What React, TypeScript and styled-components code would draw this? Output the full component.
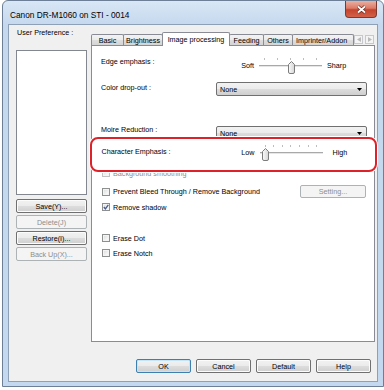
import styled, { createGlobalStyle } from "styled-components";

const GlobalStyle = createGlobalStyle`
  html, body {
    margin: 0;
    padding: 0;
    background: #ffffff;
  }
  body {
    font-family: "Liberation Sans", Arial, sans-serif;
    font-size: 7.2px;
    color: #000;
  }
  * {
    box-sizing: border-box;
  }
`;

const Window = styled.div`
  width: 382px;
  height: 387px;
  margin-left: 2px;
  display: flex;
  flex-direction: column;
  padding: 0 5px 4px 5px;
  border: 1px solid #6d7f96;
  border-radius: 6px 6px 0 0;
  background: linear-gradient(#d9e7f6 0px, #c5d8ee 24px, #c4d8ef 100%);
`;

const TitleBar = styled.div`
  height: 23px;
  display: flex;
  align-items: flex-start;
  flex: none;
`;

const Title = styled.div`
  margin-top: 9px;
  margin-left: 2px;
  font-size: 8.3px;
  line-height: 10px;
  white-space: nowrap;
`;

const CloseButton = styled.div`
  margin-left: auto;
  margin-right: 1px;
  width: 32px;
  height: 17px;
  border: 1px solid #7b3a30;
  border-top: none;
  border-radius: 0 0 4px 4px;
  background: linear-gradient(#eab0a2 0%, #dc7b66 45%, #c6442c 55%, #d2614a 100%);
  display: flex;
  align-items: center;
  justify-content: center;
`;

const Client = styled.div`
  flex: 1;
  display: flex;
  flex-direction: column;
  background: #f0f0f0;
  border: 1px solid #8ea0b6;
`;

const Body = styled.div`
  display: flex;
  flex: none;
`;

const LeftColumn = styled.div`
  width: 80px;
  margin-left: 7px;
  padding-top: 3px;
  display: flex;
  flex-direction: column;
`;

const SideLabel = styled.div`
  line-height: 10px;
  margin-left: 1px;
  white-space: nowrap;
`;

const ListBox = styled.div`
  margin-top: 12px;
  height: 145px;
  background: #fff;
  border: 1px solid #828790;
`;

const Button = styled.div<{ $disabled?: boolean; $primary?: boolean; $w?: number }>`
  height: 14px;
  width: ${(p) => (p.$w ? `${p.$w}px` : "100%")};
  flex: none;
  display: flex;
  align-items: center;
  justify-content: center;
  border-radius: 2px;
  white-space: nowrap;
  border: 1px solid ${(p) => (p.$disabled ? "#adb2b5" : p.$primary ? "#3c7fb1" : "#707070")};
  color: ${(p) => (p.$disabled ? "#8d8d8d" : "#000")};
  background: ${(p) =>
    p.$disabled
      ? "#f4f4f4"
      : "linear-gradient(#f2f2f2 0%, #ebebeb 49%, #dddddd 51%, #cfcfcf 100%)"};
  box-shadow: ${(p) =>
    p.$primary ? "inset 0 0 0 1px #c5e6f8" : p.$disabled ? "none" : "inset 0 0 0 1px #fcfcfc"};
`;

const SettingButton = styled(Button)`
  margin-left: auto;
  margin-right: 1px;
  height: 13px;
`;

const SideButtons = styled.div`
  margin-top: 4px;
  display: flex;
  flex-direction: column;
  gap: 2px;
`;

const RightColumn = styled.div`
  flex: 1;
  margin-left: 4px;
  margin-right: 2px;
  padding-top: 7px;
  display: flex;
  flex-direction: column;
`;

const TabStrip = styled.div`
  height: 14px;
  margin-bottom: -1px;
  display: flex;
  position: relative;
  z-index: 2;
`;

const TabScroller = styled.div`
  flex: 1;
  display: flex;
  overflow: hidden;
`;

const Tab = styled.div<{ $active?: boolean; $w: number; $clip?: boolean }>`
  flex: none;
  width: ${(p) => p.$w}px;
  height: ${(p) => (p.$active ? 14 : 11)}px;
  margin-top: ${(p) => (p.$active ? 0 : 2)}px;
  margin-left: -1px;
  position: relative;
  z-index: ${(p) => (p.$active ? 2 : 1)};
  border: 1px solid #898c95;
  border-bottom: none;
  border-radius: 2px 2px 0 0;
  background: ${(p) =>
    p.$active ? "#ffffff" : "linear-gradient(#f3f3f3 0%, #ebebeb 50%, #dedede 51%, #d4d4d4 100%)"};
  display: flex;
  align-items: ${(p) => (p.$active ? "flex-start" : "center")};
  justify-content: ${(p) => (p.$clip ? "flex-start" : "center")};
  padding-top: ${(p) => (p.$active ? 2 : 0)}px;
  padding-left: ${(p) => (p.$clip ? 3 : 0)}px;
  white-space: nowrap;
  overflow: hidden;
  &:first-child {
    margin-left: 0;
  }
`;

const TabArrows = styled.div`
  flex: none;
  display: flex;
  gap: 2px;
  margin-top: 3px;
  margin-right: 1px;
  height: 9px;
`;

const TabArrow = styled.div`
  width: 9px;
  height: 9px;
  border: 1px solid #c5c8cc;
  background: #f4f4f4;
  display: flex;
  align-items: center;
  justify-content: center;
`;

const Panel = styled.div`
  height: 297px;
  background: #fff;
  border: 1px solid #898c95;
  padding: 11px 7px 0 9px;
  display: flex;
  flex-direction: column;
`;

const FieldRow = styled.div<{ $mt: number }>`
  margin-top: ${(p) => p.$mt}px;
  height: 14px;
  display: flex;
  align-items: flex-start;
  flex: none;
`;

const Label = styled.div<{ $lt?: number }>`
  line-height: 10px;
  margin-top: ${(p) => p.$lt ?? 0}px;
  white-space: nowrap;
`;

const Dropdown = styled.div`
  margin-left: auto;
  width: 151px;
  height: 14px;
  border: 1px solid #707070;
  border-radius: 2px;
  background: linear-gradient(#f2f2f2 0%, #ebebeb 49%, #dddddd 51%, #cfcfcf 100%);
  display: flex;
  align-items: center;
  justify-content: space-between;
  padding: 0 4px 0 3px;
`;

const SliderRow = styled.div<{ $align: string; $mt?: number }>`
  margin-top: ${(p) => p.$mt ?? 0}px;
  height: 17px;
  display: grid;
  grid-template-columns: 1fr 30px 63px 40px;
  column-gap: 5px;
  align-items: ${(p) => p.$align};
  flex: none;
`;

const SideText = styled.div<{ $right?: boolean; $indent?: number }>`
  align-self: start;
  margin-top: 4px;
  line-height: 10px;
  text-align: ${(p) => (p.$right ? "right" : "left")};
  padding-left: ${(p) => p.$indent ?? 0}px;
  white-space: nowrap;
`;

const SliderBox = styled.div`
  position: relative;
  width: 63px;
  height: 17px;
`;

const Ticks = styled.div`
  height: 3px;
  padding: 0 5px;
  display: flex;
  justify-content: space-between;
`;

const Tick = styled.span`
  width: 1px;
  height: 2px;
  margin-top: 1px;
  background: #bdbdbd;
`;

const Track = styled.div`
  margin-top: 5px;
  height: 2px;
  border-top: 1px solid #a9a9a9;
  border-bottom: 1px solid #e6e6e6;
`;

const Thumb = styled.div`
  position: absolute;
  top: 4px;
  width: 7px;
  height: 13px;
`;

const Highlight = styled.div`
  margin: -3px -10px 0 -11px;
  height: 35px;
  border: 2.5px solid #dd2229;
  border-radius: 8px;
  background: #fff;
  box-shadow: 0 0 0 1px #fff;
  padding: 4.5px 7.5px 0 9.5px;
  position: relative;
  z-index: 1;
  flex: none;
`;

const CheckRow = styled.div<{ $mt: number; $h?: number; $disabled?: boolean }>`
  margin-top: ${(p) => p.$mt}px;
  height: ${(p) => p.$h ?? 12}px;
  display: flex;
  align-items: center;
  gap: 3px;
  padding-left: 1px;
  color: ${(p) => (p.$disabled ? "#8d8d8d" : "#000")};
  white-space: nowrap;
  flex: none;
`;

const Box = styled.span<{ $disabled?: boolean }>`
  width: 8px;
  height: 8px;
  flex: none;
  border: 1px solid ${(p) => (p.$disabled ? "#c2c2c2" : "#8e8f8f")};
  background: linear-gradient(135deg, #d9d9d9 0%, #f2f2f2 60%, #ffffff 100%);
  box-shadow: inset 0 0 0 1px #f4f4f4;
  display: flex;
  align-items: center;
  justify-content: center;
`;

const ButtonRow = styled.div`
  margin-top: 17px;
  padding-right: 6px;
  display: flex;
  justify-content: flex-end;
  gap: 5px;
  flex: none;
`;

const Slider = ({ value, ticks }: { value: number; ticks: number }) => (
  <SliderBox>
    <Ticks>
      {Array.from({ length: ticks }).map((_, i) => (
        <Tick key={i} />
      ))}
    </Ticks>
    <Track />
    <Thumb style={{ left: `${2 + (value * 54) / 100}px` }}>
      <svg width="7" height="13" viewBox="0 0 7 13">
        <defs>
          <linearGradient id={`th${value}`} x1="0" y1="0" x2="1" y2="0">
            <stop offset="0" stopColor="#fbfbfb" />
            <stop offset="1" stopColor="#d6d6d6" />
          </linearGradient>
        </defs>
        <path
          d="M0.5 3.5 L3.5 0.5 L6.5 3.5 L6.5 11 Q6.5 12.5 5 12.5 L2 12.5 Q0.5 12.5 0.5 11 Z"
          fill={`url(#th${value})`}
          stroke="#7c7c7c"
        />
      </svg>
    </Thumb>
  </SliderBox>
);

const Check = ({ checked, disabled }: { checked?: boolean; disabled?: boolean }) => (
  <Box $disabled={disabled}>
    {checked && (
      <svg width="6" height="6" viewBox="0 0 6 6">
        <path d="M0.8 3 L2.4 4.9 L5.3 0.8" fill="none" stroke="#4a5d8e" strokeWidth="1.3" />
      </svg>
    )}
  </Box>
);

const DropArrow = () => (
  <svg width="5" height="3" viewBox="0 0 5 3">
    <path d="M0 0 L5 0 L2.5 3 Z" fill="#000" />
  </svg>
);

const tabs = [
  { name: "Basic", w: 33 },
  { name: "Brightness", w: 40 },
  { name: "Image processing", w: 68, active: true },
  { name: "Feeding", w: 35 },
  { name: "Others", w: 30 },
  { name: "Imprinter/Addon", w: 62, clip: true },
];

export default function App() {
  return (
    <>
      <GlobalStyle />
      <Window>
        <TitleBar>
          <Title>Canon DR-M1060 on STI - 0014</Title>
          <CloseButton>
            <svg width="11" height="9" viewBox="0 0 11 9">
              <path d="M2 1.5 L9 7.5 M9 1.5 L2 7.5" stroke="#6a2418" strokeWidth="3.2" />
              <path d="M2 1.5 L9 7.5 M9 1.5 L2 7.5" stroke="#ffffff" strokeWidth="1.8" />
            </svg>
          </CloseButton>
        </TitleBar>
        <Client>
          <Body>
            <LeftColumn>
              <SideLabel>User Preference :</SideLabel>
              <ListBox />
              <SideButtons>
                <Button>Save(Y)...</Button>
                <Button $disabled>Delete(J)</Button>
                <Button>Restore(I)...</Button>
                <Button $disabled>Back Up(X)...</Button>
              </SideButtons>
            </LeftColumn>
            <RightColumn>
              <TabStrip>
                <TabScroller>
                  {tabs.map((t) => (
                    <Tab key={t.name} $w={t.w} $active={t.active} $clip={t.clip}>
                      {t.name}
                    </Tab>
                  ))}
                </TabScroller>
                <TabArrows>
                  <TabArrow>
                    <svg width="4" height="5" viewBox="0 0 4 5">
                      <path d="M0 2.5 L4 0 L4 5 Z" fill="#b9b9b9" />
                    </svg>
                  </TabArrow>
                  <TabArrow>
                    <svg width="4" height="5" viewBox="0 0 4 5">
                      <path d="M4 2.5 L0 0 L0 5 Z" fill="#b9b9b9" />
                    </svg>
                  </TabArrow>
                </TabArrows>
              </TabStrip>
              <Panel>
                <SliderRow $align="start">
                  <Label>Edge emphasis :</Label>
                  <SideText $right>Soft</SideText>
                  <Slider value={50} ticks={5} />
                  <SideText>Sharp</SideText>
                </SliderRow>
                <FieldRow $mt={8}>
                  <Label $lt={1}>Color drop-out :</Label>
                  <Dropdown>
                    <span>None</span>
                    <DropArrow />
                  </Dropdown>
                </FieldRow>
                <FieldRow $mt={30}>
                  <Label $lt={-1}>Moire Reduction :</Label>
                  <Dropdown>
                    <span>None</span>
                    <DropArrow />
                  </Dropdown>
                </FieldRow>
                <Highlight>
                  <SliderRow $align="center">
                    <Label>Character Emphasis :</Label>
                    <SideText $right>Low</SideText>
                    <Slider value={0} ticks={7} />
                    <SideText $indent={5}>High</SideText>
                  </SliderRow>
                </Highlight>
                <CheckRow $mt={-5} $disabled>
                  <Check disabled />
                  Background smoothing
                </CheckRow>
                <CheckRow $mt={6} $h={13}>
                  <Check />
                  Prevent Bleed Through / Remove Background
                  <SettingButton $disabled $w={66}>
                    Setting...
                  </SettingButton>
                </CheckRow>
                <CheckRow $mt={3}>
                  <Check checked />
                  Remove shadow
                </CheckRow>
                <CheckRow $mt={19}>
                  <Check />
                  Erase Dot
                </CheckRow>
                <CheckRow $mt={3}>
                  <Check />
                  Erase Notch
                </CheckRow>
              </Panel>
            </RightColumn>
          </Body>
          <ButtonRow>
            <Button $primary $w={55}>
              OK
            </Button>
            <Button $w={55}>Cancel</Button>
            <Button $w={55}>Default</Button>
            <Button $w={55}>Help</Button>
          </ButtonRow>
        </Client>
      </Window>
    </>
  );
}
